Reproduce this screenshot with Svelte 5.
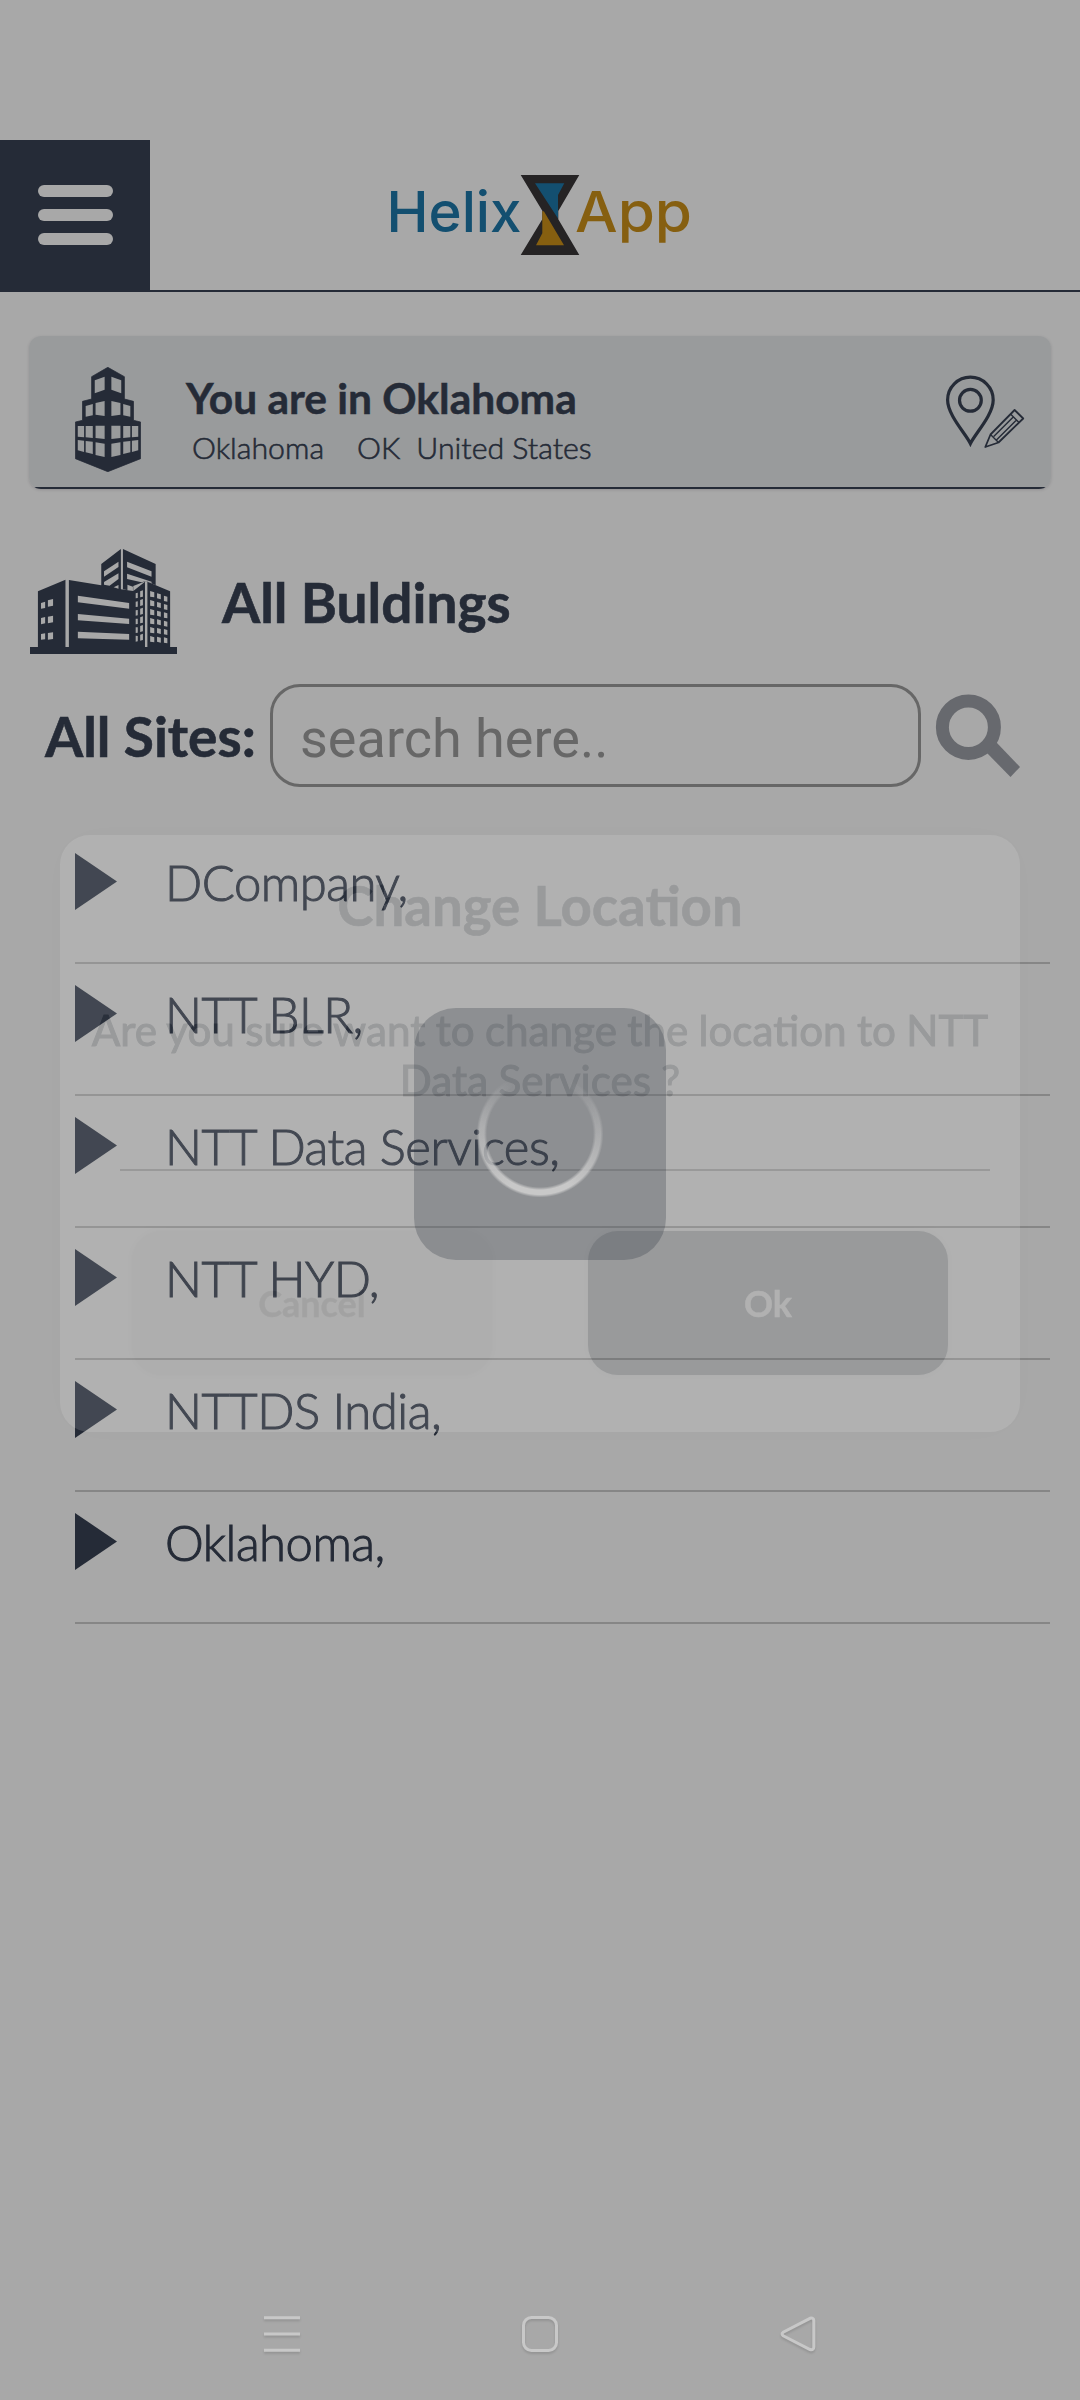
<script>
  const sites = ['DCompany,', 'NTT BLR,', 'NTT Data Services,', 'NTT HYD,', 'NTTDS India,', 'Oklahoma,'];

  // Windows on the left half of the tower; the right half is mirrored.
  const towerPanes = [
    '240,181 265,170 265,209 240,220',
    '217,258 235,252 235,286 217,290',
    '242,249 265,243 265,288 242,284',
    '197,318 213,318 213,352 197,350',
    '217,318 235,318 235,354 217,352',
    '242,317 265,317 265,357 242,354',
    '197,360 213,362 213,396 197,391',
    '217,363 235,365 235,402 217,397',
    '242,367 265,371 265,411 242,405'
  ];
</script>

<div class="screen">
  <header>
    <button class="menu" aria-label="Menu"><i></i><i></i><i></i></button>
    <svg class="logo" viewBox="380 165 320 90" width="320" height="90">
      <text x="386.5" y="232" textLength="135" lengthAdjust="spacingAndGlyphs" fill="#134f70">Helix</text>
      <text x="575" y="232" textLength="117" lengthAdjust="spacingAndGlyphs" fill="#865f10">App</text>
      <path fill="#252324" d="M520.7 175H579.3L558.3 211V219.3L579.3 255H520.7L542.3 219.3V210.7Z" />
      <path fill="#134f70" d="M535 183.3H564.3L558 195V218.5Z" />
      <path fill="#865f10" d="M544 211.5L564 245.3H536L542.3 233.3V211Z" />
    </svg>
  </header>

  <section class="here">
    <svg class="tower" viewBox="190 141 167 315" preserveAspectRatio="none" width="66" height="105">
      <path fill="#252b37" stroke="#252b37" stroke-width="2" stroke-linejoin="round"
        d="M273 142L315 170V237L338 244V301L356 306V416L273 455L191 416V306L209 301V244L232 237V170Z" />
      <g fill="#999b9c">
        {#each towerPanes as p}<polygon points={p} />{/each}
      </g>
      <g fill="#999b9c" transform="translate(547 0) scale(-1 1)">
        {#each towerPanes as p}<polygon points={p} />{/each}
      </g>
    </svg>
    <div class="place">
      <h1>You are in Oklahoma</h1>
      <p><span>Oklahoma</span><span>OK</span><span>United States</span></p>
    </div>
    <svg class="pin" viewBox="944 374 84 78" width="84" height="78" fill="none" stroke="#252b37">
      <path stroke-width="3.2" d="M970.4 443.5C966 434 947.6 415 947.6 400A22.8 22.8 0 0 1 993.2 400C993.2 415 974.8 434 970.4 443.5Z" />
      <circle cx="970.4" cy="400.3" r="10.9" stroke-width="3.2" />
      <g stroke-width="1.8" stroke-linejoin="round">
        <path d="M985.3 447L990.5 434.5L1014.6 410L1023.2 418.5L998.5 442.5Z" />
        <path stroke-width="1.4" d="M990.5 434.5L998.5 442.5M1010.5 414L1019 422.5M993.7 436.5L1013 417.2M996.7 439.7L1016 420.4" />
      </g>
    </svg>
  </section>

  <section class="heading">
    <svg viewBox="87 57 427 315" preserveAspectRatio="none" width="147" height="105">
      <g fill="#252b37">
        <path d="M87 351H110V184L190 149V351H200V150L294 166V102L351 57V178L387 183L421 155V352H428V155L494 184V351H514V372H87Z" />
        <path d="M190 351H494V360H190Z" />
        <path d="M357 57L452 102V166L424 153L387 168V184L357 178Z" />
      </g>
      <g fill="#a8a8a8">
        <path d="M302 124L344 95V111L302 140ZM302 156L344 130V147L318 167L302 164ZM330 172L344 165V176Z" />
        <path d="M369 95L440 124V140L369 112ZM369 131L440 155V160L424 153L411 157L369 147ZM370 164L386 170V183L370 180Z" />
        <path d="M226 197L375 219V236L226 217ZM226 252L375 266V282L226 271ZM226 305L375 312V329L226 325Z" />
        <path d="M119 219L131 215V234L119 236ZM139 211L154 207V227L139 230ZM119 264L131 261V280L119 283ZM139 260L154 257V277L139 280ZM119 312L131 310V328L119 329ZM139 309L154 307V327L139 329Z" />
        {#each [0, 1, 2, 3, 4, 5] as r}
          <path transform="translate(0 {r * 26})"
            d="M394 {190 - r * 0.6}L400 188V204L394 205ZM407 184L415 181V200L407 202Z" />
          <path transform="translate(0 {r * 27})"
            d="M436 183L448 187V202L436 200ZM456 {190 - r}L467 {193 - r}V{208 - r}L456 {205 - r}ZM476 {197 - r * 2}L486 {200 - r * 2}V{215 - r * 2}L476 {213 - r * 2}Z" />
        {/each}
      </g>
    </svg>
    <h2>All Buldings</h2>
  </section>

  <section class="search">
    <label for="q">All Sites:</label>
    <input id="q" placeholder="search here.." />
    <svg viewBox="934 692 90 90" width="90" height="90">
      <ellipse cx="968.4" cy="727.2" rx="26" ry="26.2" fill="none" stroke="#67696e" stroke-width="13" />
      <path fill="#67696e" d="M996.5 742.5L1020 767L1010.5 777L987 753Z" />
    </svg>
  </section>

  <ul>
    {#each sites as site}
      <li>
        <svg viewBox="0 0 42 57" width="42" height="57"><path fill="#252b37" d="M0 0L42 28.5L0 57Z" /></svg>
        <span>{site}</span>
      </li>
    {/each}
  </ul>

  <nav>
    <svg width="36" height="38" viewBox="0 0 36 38"><path d="M0 1.7H36M0 18H36M0 34.3H36" /></svg>
    <svg width="36" height="38" viewBox="0 0 36 38"><rect x="1.5" y="1.5" width="33" height="33" rx="8" /></svg>
    <svg width="36" height="38" viewBox="0 0 36 38">
      <path d="M30 2.3L3.2 16.2Q1 18 3.2 19.8L30 33.5Q33.8 34.3 33.8 31V4.6Q33.8 1.4 30 2.3Z" />
    </svg>
  </nav>

  <div class="dialog">
    <h3>Change Location</h3>
    <p>Are you sure want to change the location to NTT<br />Data Services ?</p>
    <hr />
    <div class="actions">
      <button class="cancel">Cancel</button>
      <button class="ok">Ok</button>
    </div>
  </div>

  <div class="loader"><div class="ring"></div></div>
</div>

<style>
  :global(body) {
    margin: 0;
    background: #a8a8a8;
  }
  .screen {
    position: relative;
    box-sizing: border-box;
    width: 1080px;
    height: 2400px;
    padding-top: 140px;
    display: flex;
    flex-direction: column;
    overflow: hidden;
    background: #a8a8a8;
    color: #252b37;
    font-family: Lato, 'Liberation Sans', sans-serif;
  }
  h1, h2, h3, p, ul { margin: 0; padding: 0; }
  button { border: 0; padding: 0; font: inherit; }
  svg { display: block; flex: none; }

  header {
    display: flex;
    height: 150px;
    border-bottom: 2px solid #252b37;
  }
  .menu {
    display: flex;
    flex-direction: column;
    align-items: center;
    gap: 12px;
    width: 150px;
    padding-top: 45px;
    background: #252b37;
  }
  .menu i {
    width: 75px;
    height: 12px;
    border-radius: 6px;
    background: #a8a8a8;
  }
  .logo { margin: 25px 0 0 230px; overflow: visible; }
  .logo text { font: 500 56px Inter, sans-serif; }

  .here {
    box-sizing: border-box;
    display: flex;
    align-items: flex-start;
    height: 153px;
    margin: 44px 29px 0;
    padding: 31px 23px 0 46px;
    border-radius: 12px;
    background: linear-gradient(to top, #252b37 2px, #999b9c 2px);
    box-shadow: 0 1px 3px rgba(60, 50, 60, 0.2);
  }
  .place { flex: 1; padding: 7px 0 0 45px; }
  h1 {
    font-size: 42.5px;
    line-height: 48px;
    font-weight: 700;
    -webkit-text-stroke: 0.5px currentColor;
  }
  .place p {
    display: flex;
    padding: 5px 0 0 6px;
    font-size: 30.3px;
    font-weight: 300;
    line-height: 40px;
    -webkit-text-stroke: 0.6px currentColor;
  }
  .place span:nth-child(2) { margin: 0 16px 0 33px; }
  .pin { margin-top: 7px; }

  .heading {
    display: flex;
    gap: 45px;
    padding: 60px 0 0 30px;
  }
  h2, label {
    font-size: 55px;
    line-height: 66px;
    font-weight: 700;
    -webkit-text-stroke: 0.6px currentColor;
  }
  h2 { padding-top: 20px; }

  .search {
    display: flex;
    height: 103px;
    padding: 30px 0 0 45px;
  }
  label { width: 225px; padding-top: 19px; white-space: nowrap; }
  input {
    box-sizing: border-box;
    width: 651px;
    height: 103px;
    padding: 5px 27px 0;
    border: 3px solid #676767;
    border-radius: 30px;
    background: none;
    font: 400 54px Roboto, sans-serif;
  }
  input::placeholder { color: #676767; opacity: 1; }
  .search svg { margin: 8px 0 0 13px; }

  ul {
    margin: 45px 30px 0 75px;
    list-style: none;
  }
  li {
    box-sizing: border-box;
    display: flex;
    gap: 48px;
    height: 132px;
    border-bottom: 2px solid #868686;
    font-size: 49px;
    font-weight: 300;
    line-height: 100px;
    letter-spacing: -0.5px;
    -webkit-text-stroke: 1px currentColor;
  }
  li svg { margin-top: 21px; }

  nav {
    display: flex;
    justify-content: space-between;
    margin-top: auto;
    padding: 0 264px 46px;
  }
  nav svg {
    fill: none;
    stroke: #c8c8c8;
    stroke-width: 3;
    filter: drop-shadow(0 2px 1px rgba(0, 0, 0, 0.12));
  }

  .dialog {
    position: absolute;
    left: 60px;
    top: 835px;
    box-sizing: border-box;
    width: 960px;
    height: 597px;
    padding: 37px 0 0;
    border-radius: 30px;
    background: #e9e9e9;
    box-shadow: 0 0 40px rgba(0, 0, 0, 0.08);
    opacity: 0.15;
    color: #464e57;
    text-align: center;
  }
  h3 {
    font-size: 54.6px;
    line-height: 66px;
    font-weight: 700;
    -webkit-text-stroke: 0.6px currentColor;
  }
  .dialog p {
    padding-top: 67px;
    font-size: 42.2px;
    font-weight: 400;
    line-height: 50px;
    word-spacing: -0.5px;
    white-space: nowrap;
    -webkit-text-stroke: 1px currentColor;
  }
  hr {
    height: 2px;
    margin: 64px 30px 0 60px;
    border: 0;
    background: #464646;
  }
  .actions {
    display: flex;
    justify-content: space-between;
    padding: 60px 72px 0;
  }
  .actions button {
    width: 360px;
    height: 144px;
    border-radius: 30px;
    font-size: 36px;
    font-weight: 700;
    line-height: 144px;
    box-shadow: 0 0 8px rgba(0, 0, 0, 0.15);
    -webkit-text-stroke: 0.4px currentColor;
  }
  .cancel { background: #d0d0d0; color: #868686; }
  .ok { background: #464e57; color: #e9e9e9; }

  .loader {
    position: absolute;
    left: 414px;
    top: 1008px;
    display: grid;
    place-items: center;
    width: 252px;
    height: 252px;
    border-radius: 42px;
    background: rgba(39, 46, 59, 0.26);
  }
  .ring {
    width: 128px;
    height: 128px;
    border-radius: 50%;
    background: conic-gradient(
      rgba(200, 200, 200, 0) 8%,
      rgba(200, 200, 200, 0.55) 27%,
      #c8c8c8 42%,
      #c8c8c8 58%,
      rgba(200, 200, 200, 0.55) 77%,
      rgba(200, 200, 200, 0) 92%
    );
    mask: radial-gradient(circle, transparent 53px, #000 56px, #000 60.5px, transparent 63.5px);
  }
</style>
